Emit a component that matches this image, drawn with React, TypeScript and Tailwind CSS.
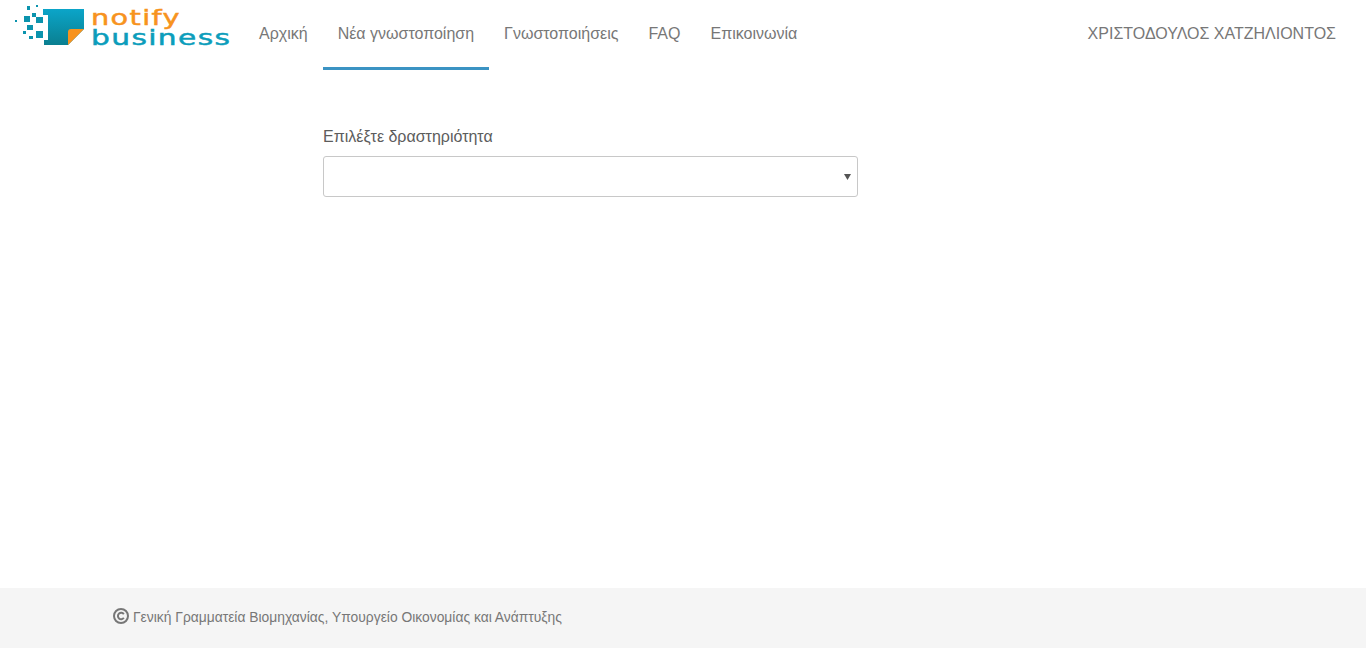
const navItems = ['Αρχική', 'Νέα γνωστοποίηση', 'Γνωστοποιήσεις', 'FAQ', 'Επικοινωνία'];

function Logo() {
  return (
    <div className="flex h-[50px] w-[244px] shrink-0 items-start pl-[15px]">
      <svg width="71" height="42" viewBox="0 0 71 42" className="mt-[5px] shrink-0">
        <defs>
          <linearGradient id="sheet" x1="0" y1="0" x2="0" y2="1">
            <stop offset="0" stopColor="#0ba5c9" />
            <stop offset="1" stopColor="#0a7f90" />
          </linearGradient>
        </defs>
        <path d="M28 4H69V24L53 40H29V35H33V10H28Z" fill="url(#sheet)" />
        <path d="M53 40L69 24H56Q53 24 53 27Z" fill="#f7931e" />
        <g fill="#0b93ad">
          <rect x="9" y="11" width="6" height="6" />
          <rect x="21" y="12" width="7" height="6" />
          <rect x="17" y="8" width="4" height="4" />
          <rect x="12" y="1" width="3" height="4" />
          <rect x="21" y="0" width="2" height="2" />
          <rect x="0" y="15" width="2" height="2" />
          <rect x="12" y="20" width="6" height="5" />
          <rect x="8" y="26" width="3" height="3" />
          <rect x="21" y="26" width="7" height="7" />
          <rect x="14" y="31" width="4" height="3" />
        </g>
      </svg>
      <div className="ml-[5px] font-['DejaVu_Sans',sans-serif] text-[21px] tracking-[1px] [-webkit-text-stroke:0.5px]">
        <div className="mt-[8px] h-[20px] origin-left scale-x-[1.37] leading-[20px] text-[#f7931e]">notify</div>
        <div className="h-[20px] origin-left scale-x-[1.41] leading-[20px] text-[#0b9dbb]">business</div>
      </div>
    </div>
  );
}

export default function App() {
  return (
    <div className="flex min-h-screen flex-col bg-white font-['Liberation_Sans',Arial,sans-serif] text-[16px] text-[#777]">
      <header className="flex h-[70px] items-start justify-between pr-[30px]">
        <div className="flex">
          <Logo />
          <nav className="flex">
            {navItems.map((item, i) => (
              <a
                key={item}
                className={`flex h-[70px] items-center px-[15px] ${
                  i === 1 ? 'border-b-[3px] border-[#3b93c3] pt-[1px]' : 'pb-[2px]'
                }`}
              >
                {item}
              </a>
            ))}
          </nav>
        </div>
        <div className="flex h-[70px] items-center pb-[2px]">ΧΡΙΣΤΟΔΟΥΛΟΣ ΧΑΤΖΗΛΙΟΝΤΟΣ</div>
      </header>

      <main className="flex-1 pl-[323px] pt-[57px]">
        <div className="w-[535px]">
          <label className="mb-[9px] block leading-[20px] text-[#5c5c5c]">Επιλέξτε δραστηριότητα</label>
          <div className="flex h-[41px] items-center justify-end rounded-[3px] border border-[#c8c8c8] pr-[6px]">
            <svg width="7" height="6" viewBox="0 0 7 6">
              <path d="M0 0H7L3.5 6Z" fill="#555" />
            </svg>
          </div>
        </div>
      </main>

      <footer className="flex h-[60px] items-center bg-[#f5f5f5] pb-[2px] pl-[113px] text-[13.85px] text-[#777]">
        <svg width="16" height="16" viewBox="0 0 16 16" className="mb-[3px] mr-[4px]">
          <circle cx="8" cy="8" r="7" fill="none" stroke="#777" strokeWidth="2" />
          <path d="M10.8 6.2A3.2 3.2 0 1 0 10.8 9.8" fill="none" stroke="#777" strokeWidth="2" />
        </svg>
        <span>Γενική Γραμματεία Βιομηχανίας, Υπουργείο Οικονομίας και Ανάπτυξης</span>
      </footer>
    </div>
  );
}
